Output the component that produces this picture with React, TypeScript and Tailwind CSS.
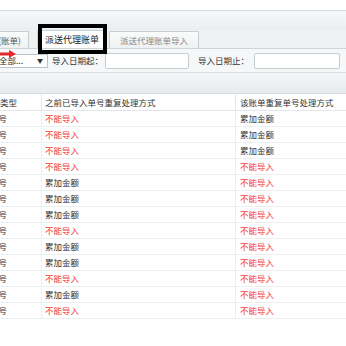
import React from "react";

const rows: [string, string][] = [
  ["不能导入", "累加金额"],
  ["不能导入", "累加金额"],
  ["不能导入", "累加金额"],
  ["不能导入", "不能导入"],
  ["累加金额", "不能导入"],
  ["累加金额", "不能导入"],
  ["累加金额", "不能导入"],
  ["不能导入", "不能导入"],
  ["累加金额", "不能导入"],
  ["累加金额", "不能导入"],
  ["不能导入", "不能导入"],
  ["累加金额", "不能导入"],
  ["不能导入", "不能导入"],
];

function Cell({ text }: { text: string }) {
  const red = text === "不能导入";
  return <span className={red ? "text-[#f53a3a]" : "text-[#333]"}>{text}</span>;
}

export default function App() {
  return (
    <div
      className="relative w-[346px] h-[346px] overflow-hidden bg-white text-[8.5px] leading-none text-[#333]"
      style={{ fontFamily: '"Noto Sans CJK SC", "Noto Sans", sans-serif' }}
    >
      {/* top white strip */}
      <div className="h-[10px]" />

      {/* toolbar band */}
      <div className="h-[20px] border-t border-[#d6dde0] bg-gradient-to-b from-[#f6f8f9] to-[#eaeff1]" />

      {/* tabs */}
      <div className="flex items-end h-[19px] bg-[#edf1f2] border-b border-[#cdd5d9]">
        <div className="flex justify-end items-center overflow-hidden whitespace-nowrap w-[29px] h-[17px] border-r border-t border-[#c7cfd3] bg-gradient-to-b from-[#fafbfb] to-[#eef1f2] pr-[7px] text-[#555]">
          对账单(账单)
        </div>
        <div className="flex items-center justify-center w-[70px] h-[18px] ml-[8px] border border-b-0 border-[#c7cfd3] bg-white text-[9px] text-[#222]">
          派送代理账单
        </div>
        <div className="flex items-center justify-center w-[90px] h-[17px] ml-[2px] border border-b-0 border-[#c7cfd3] bg-gradient-to-b from-[#fafbfb] to-[#eef1f2] text-[#888]">
          派送代理账单导入
        </div>
      </div>

      {/* filters */}
      <div className="flex items-center h-[24px] bg-[#f5f7f8] border-b border-[#d6dde0]">
        <div className="relative flex items-center justify-end overflow-hidden whitespace-nowrap w-[48px] h-[14px] bg-white border border-l-0 border-[#b9c2c6] pr-[24px]">
          全部...
          <span className="absolute right-[4px] top-[3px] text-[6px] text-[#333]">▼</span>
        </div>
        <span className="ml-[4px] w-[53px]">导入日期起：</span>
        <div className="w-[84px] h-[16px] bg-white border border-[#c5cdd1] rounded-[2px]" />
        <span className="ml-[9px] w-[56px]">导入日期止：</span>
        <div className="w-[86px] h-[16px] bg-white border border-[#c5cdd1] rounded-[2px]" />
      </div>

      {/* grid toolbar */}
      <div className="h-[21px] bg-gradient-to-b from-[#f3f6f7] to-[#e6ebed] border-b border-[#d3dadd]" />

      {/* table */}
      <div className="grid grid-cols-[42px_194px_1fr]">
        <div className="flex items-center justify-end overflow-hidden whitespace-nowrap h-[17px] border-b border-r border-[#e2e6e8] pr-[24px]">单号类型</div>
        <div className="flex items-center h-[17px] border-b border-r border-[#e2e6e8] pl-[3px]">之前已导入单号重复处理方式</div>
        <div className="flex items-center h-[17px] border-b border-[#e2e6e8] pl-[4px]">该账单重复单号处理方式</div>
        {rows.map(([a, b], i) => (
          <React.Fragment key={i}>
            <div className="flex items-center justify-end overflow-hidden whitespace-nowrap h-[16px] border-b border-r border-[#eceff0] pr-[34px]">单号</div>
            <div className="flex items-center h-[16px] border-b border-r border-[#eceff0] pl-[3px]"><Cell text={a} /></div>
            <div className="flex items-center h-[16px] border-b border-[#eceff0] pl-[4px]"><Cell text={b} /></div>
          </React.Fragment>
        ))}
      </div>

      {/* annotation: black frame round the active tab */}
      <div className="absolute left-[38px] top-[24px] w-[69px] h-[30px] border-[4px] border-black" />

      {/* annotation: red arrow */}
      <svg className="absolute left-0 top-[49px]" width="17" height="10" viewBox="0 0 17 10">
        <path d="M0 5 L10 5" stroke="#e8262a" strokeWidth="3" />
        <path d="M9 1 L16 5 L9 9 Z" fill="#e8262a" />
      </svg>
    </div>
  );
}
